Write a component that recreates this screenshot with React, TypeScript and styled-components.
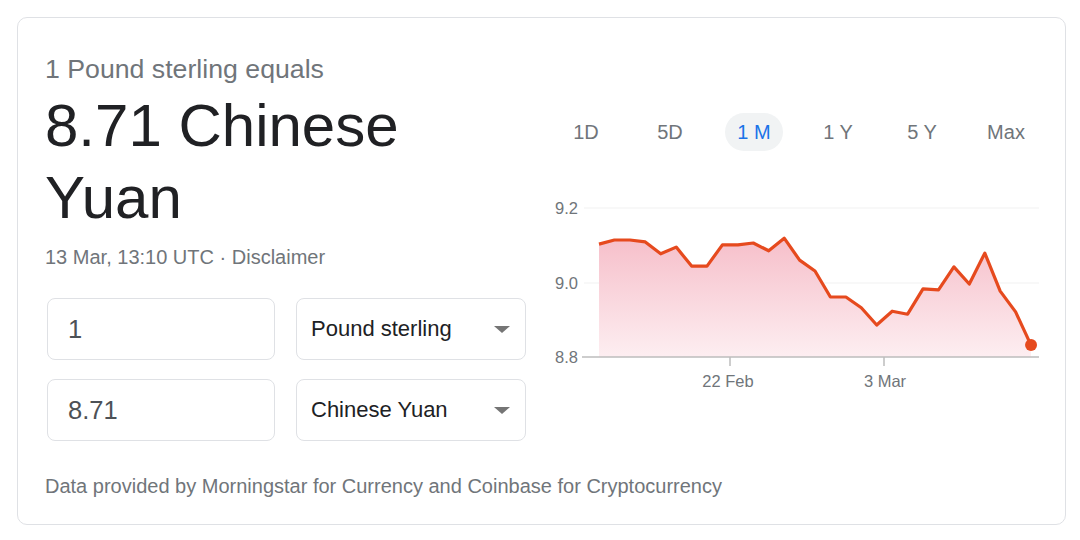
import styled, { createGlobalStyle } from "styled-components";

const GlobalStyle = createGlobalStyle`
  body {
    margin: 0;
    background: #fff;
    font-family: "Liberation Sans", Arial, sans-serif;
  }
`

const ranges = ["1D", "5D", "1 M", "1 Y", "5 Y", "Max"]

// one month of GBP -> CNY closes
const rates = [
  9.103, 9.114, 9.114, 9.109, 9.077, 9.095, 9.044, 9.044, 9.101, 9.101,
  9.106, 9.085, 9.119, 9.06, 9.031, 8.961, 8.961, 8.932, 8.886, 8.923,
  8.915, 8.983, 8.98, 9.042, 8.996, 9.079, 8.977, 8.921, 8.832,
]

const X0 = 55
const STEP = 15.43
const toY = (v: number) => 17 + (9.2 - v) * 372.5

function RateChart() {
  const pts = rates.map((v, i) => [X0 + i * STEP, toY(v)])
  const line = pts.map(([x, y]) => `${x.toFixed(1)},${y.toFixed(1)}`).join(" ")
  const last = pts[pts.length - 1]
  const area = `M${X0},166 L${line.replace(/ /g, " L")} L${last[0].toFixed(1)},166 Z`

  return (
    <Chart width="504" height="205" viewBox="0 0 504 205">
      <defs>
        <linearGradient id="rateFill" x1="0" y1="0" x2="0" y2="1">
          <stop offset="0" stopColor="#f6bfca" />
          <stop offset="1" stopColor="#fdeef1" />
        </linearGradient>
      </defs>
      <line x1="40" y1="17" x2="495" y2="17" stroke="#f1f1f1" strokeWidth="1" />
      <line x1="40" y1="92" x2="495" y2="92" stroke="#f1f1f1" strokeWidth="1" />
      <path d={area} fill="url(#rateFill)" />
      <line x1="38" y1="166" x2="495" y2="166" stroke="#bdbdbd" strokeWidth="1.5" />
      <line x1="186" y1="166" x2="186" y2="175" stroke="#bdbdbd" strokeWidth="1.5" />
      <line x1="340" y1="166" x2="340" y2="175" stroke="#bdbdbd" strokeWidth="1.5" />
      <polyline points={line} fill="none" stroke="#e64a1e" strokeWidth="3.2" strokeLinejoin="round" />
      <circle cx={last[0]} cy={last[1]} r="6" fill="#e64a1e" />
      <text x="11" y="23" className="axis">9.2</text>
      <text x="11" y="98" className="axis">9.0</text>
      <text x="11" y="172" className="axis">8.8</text>
      <text x="184" y="196" className="axis" textAnchor="middle">22 Feb</text>
      <text x="341" y="196" className="axis" textAnchor="middle">3 Mar</text>
    </Chart>
  )
}

export default function App() {
  return (
    <>
      <GlobalStyle />
      <Card>
        <Main>
          <Left>
            <Lead>1 Pound sterling equals</Lead>
            <Result>8.71 Chinese Yuan</Result>
            <Stamp>13 Mar, 13:10 UTC · Disclaimer</Stamp>
            <Form>
              <Amount>1</Amount>
              <Select>
                Pound sterling
                <Caret />
              </Select>
              <Amount>8.71</Amount>
              <Select>
                Chinese Yuan
                <Caret />
              </Select>
            </Form>
          </Left>
          <Right>
            <Tabs>
              {ranges.map((r) => (
                <Tab key={r}>
                  <TabLabel $active={r === "1 M"}>{r}</TabLabel>
                </Tab>
              ))}
            </Tabs>
            <RateChart />
          </Right>
        </Main>
        <Footer>Data provided by Morningstar for Currency and Coinbase for Cryptocurrency</Footer>
      </Card>
    </>
  )
}

const Card = styled.div`
  box-sizing: border-box;
  width: 1049px;
  height: 508px;
  margin: 17px;
  padding: 34px 0 0 27px;
  border: 1px solid #dfe1e5;
  border-radius: 10px;
  display: flex;
  flex-direction: column;
`
const Main = styled.div`
  display: flex;
  gap: 18px;
`
const Left = styled.div`
  width: 481px;
  display: flex;
  flex-direction: column;
`
const Lead = styled.div`
  font-size: 26.7px;
  line-height: 34px;
  color: #70757a;
`
const Result = styled.div`
  margin-top: 4px;
  width: 400px;
  font-size: 60px;
  line-height: 72px;
  color: #202124;
`
const Stamp = styled.div`
  margin-top: 9px;
  font-size: 20px;
  line-height: 28px;
  color: #70757a;
`
const Form = styled.div`
  margin: 27px 0 0 2px;
  display: grid;
  grid-template-columns: 228px 230px;
  column-gap: 21px;
  row-gap: 19px;
`
const Amount = styled.div`
  box-sizing: border-box;
  height: 62px;
  padding-left: 20px;
  display: flex;
  align-items: center;
  border: 1px solid #dfe1e5;
  border-radius: 8px;
  font-size: 25.5px;
  color: #4d5156;
`
const Select = styled.div`
  box-sizing: border-box;
  height: 62px;
  padding: 0 15px 0 14px;
  display: flex;
  align-items: center;
  justify-content: space-between;
  border: 1px solid #dfe1e5;
  border-radius: 8px;
  font-size: 22px;
  color: #202124;
`
const Caret = styled.span`
  width: 0;
  height: 0;
  border-left: 8px solid transparent;
  border-right: 8px solid transparent;
  border-top: 7px solid #757575;
`
const Right = styled.div`
  width: 504px;
  display: flex;
  flex-direction: column;
`
const Tabs = styled.div`
  margin-top: 61px;
  margin-bottom: 40px;
  height: 38px;
  display: grid;
  grid-template-columns: repeat(6, 84px);
`
const Tab = styled.div`
  display: flex;
  justify-content: center;
  align-items: center;
`
const TabLabel = styled.span<{ $active?: boolean }>`
  display: flex;
  align-items: center;
  height: 38px;
  padding: 0 ${(p) => (p.$active ? "12px" : "0")};
  border-radius: 19px;
  font-size: 20px;
  color: ${(p) => (p.$active ? "#1a73e8" : "#70757a")};
  background: ${(p) => (p.$active ? "#f1f3f4" : "transparent")};
`
const Chart = styled.svg`
  display: block;
  .axis {
    font-family: "Liberation Sans", Arial, sans-serif;
    font-size: 16.5px;
    fill: #70757a;
  }
`
const Footer = styled.div`
  margin-top: 31px;
  font-size: 20px;
  line-height: 28px;
  color: #70757a;
`
